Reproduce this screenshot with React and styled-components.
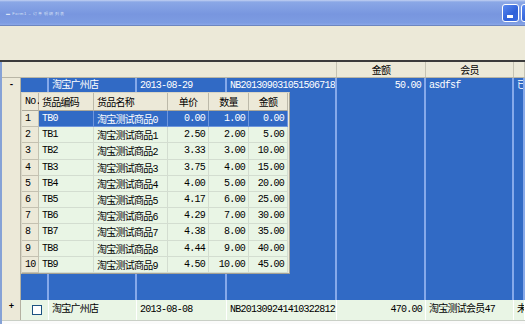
import React from "react";
import styled, { createGlobalStyle } from "styled-components";

const GlobalStyle = createGlobalStyle`
  html, body { margin: 0; padding: 0; background: #ffffff; }
  * { box-sizing: border-box; }
`;

const Window = styled.div`
  width: 525px;
  height: 324px;
  overflow: hidden;
  display: flex;
  flex-direction: column;
  background: #ffffff;
  font-family: "Liberation Mono", "Noto Sans CJK SC", monospace;
  font-size: 10px;
  letter-spacing: -0.75px;
  color: #000;
`;

const TitleBar = styled.div`
  height: 26px;
  flex: none;
  display: flex;
  align-items: center;
  padding-left: 6px;
  background: linear-gradient(#c3d1f2 0, #8aa7e6 2px, #7896df 55%, #7d9ce2 88%, #8aa7e8 96%, #52679a 100%);
  overflow: hidden;
`;

const TitleText = styled.div`
  flex: 1;
  font-family: "Liberation Sans", sans-serif;
  font-size: 4px;
  letter-spacing: 0.6px;
  color: #d9e2f6;
  white-space: nowrap;
`;

const TitleButtons = styled.div`
  display: flex;
  gap: 2px;
  margin-right: -13px;
`;

const CaptionButton = styled.div`
  width: 17px;
  height: 18px;
  border: 1px solid #ffffff;
  border-radius: 3px;
  background: linear-gradient(135deg, #5b8af0, #2f60d8 60%, #3a6be0);
  display: flex;
  align-items: flex-end;
  padding: 0 0 3px 4px;
  &::after {
    content: "";
    width: 6px;
    height: 3px;
    background: #ffffff;
    display: ${(p) => (p.$min ? "block" : "none")};
  }
`;

const Toolbar = styled.div`
  height: 36px;
  flex: none;
  background: #ece9d8;
  border-bottom: 2px solid #3b3b3b;
`;

const GridArea = styled.div`
  flex: 1;
  display: flex;
  flex-direction: column;
  border-left: 2px solid #86a2d6;
`;

const COLS = "19px 28px 88px 90px 110px 89px 88px 1fr";

const HeaderRow = styled.div`
  display: grid;
  grid-template-columns: ${COLS};
  height: 16px;
  flex: none;
  background: #ece9d8;
  border-bottom: 1px solid #b9b6a6;
`;

const HeaderCell = styled.div`
  grid-column: ${(p) => p.$span || "auto"};
  display: flex;
  align-items: center;
  justify-content: center;
  border-right: 1px solid #c6c3b3;
  color: #000;
`;

const MasterRow = styled.div`
  display: grid;
  grid-template-columns: ${COLS};
  grid-template-rows: 14px 182px 26px;
  flex: none;
`;

const Gutter = styled.div`
  grid-row: 1 / -1;
  grid-column: 1;
  background: #ece9d8;
  border-right: 1px solid #b4b1a1;
  display: flex;
  justify-content: center;
  padding-top: ${(p) => p.$pad}px;
  color: #000;
  font-weight: bold;
  font-size: 9px;
  line-height: 8px;
`;

const Cell = styled.div`
  grid-row: 1 / -1;
  grid-column: ${(p) => p.$col};
  background: ${(p) => (p.$sel ? "#316ac5" : "#e9f5e5")};
  color: ${(p) => (p.$sel ? "#ffffff" : "#000000")};
  border-right: ${(p) => (p.$sel ? "2px solid #86a9ea" : "1px solid #ffffff")};
  padding: 2px 3px 0;
  text-align: ${(p) => (p.$right ? "right" : "left")};
  white-space: nowrap;
  overflow: hidden;
  line-height: 12px;
`;

const Check = styled.div`
  width: 10px;
  height: 10px;
  margin: 1px 0 0 8px;
  border: 1px solid #1c5180;
  background: #ffffff;
`;

const DetailPanel = styled.div`
  grid-row: 2;
  grid-column: 2 / 7;
  justify-self: start;
  width: 269px;
  height: 182px;
  z-index: 1;
  background: #ece9d8;
  border: 1px solid #a5a294;
  border-top-color: #d8d5c6;
  border-left-color: #d8d5c6;
  display: grid;
  grid-template-columns: 17px 55px 74px 41px 40px 39px 1fr;
  grid-template-rows: 18px repeat(10, 1fr);
`;

const DHead = styled.div`
  display: flex;
  align-items: center;
  justify-content: ${(p) => (p.$center ? "center" : "flex-start")};
  padding: 0 3px;
  border-right: 1px solid #bcb9a9;
  border-bottom: 1px solid #aca899;
  background: #ece9d8;
  white-space: nowrap;
`;

const DCell = styled.div`
  display: flex;
  align-items: center;
  justify-content: ${(p) => (p.$right ? "flex-end" : "flex-start")};
  padding: 0 3px;
  white-space: nowrap;
  background: ${(p) => (p.$no ? "#ece9d8" : p.$sel ? "#316ac5" : "#e9f5e5")};
  color: ${(p) => (p.$sel && !p.$no ? "#ffffff" : "#000000")};
  border-right: 1px solid ${(p) => (p.$no ? "#c4c1b1" : p.$sel ? "#6e96dc" : "#d3ddd0")};
  border-bottom: 1px solid ${(p) => (p.$no ? "#c4c1b1" : p.$sel ? "#6e96dc" : "#d3ddd0")};
`;

const Filler = styled.div`
  background: #ece9d8;
`;

const PlainRow = styled.div`
  display: grid;
  grid-template-columns: ${COLS};
  height: 21px;
  flex: none;
  border-bottom: 1px solid #c9cfc6;
`;

const RowGutter = styled(Gutter)`
  grid-row: 1;
`;

const PlainCell = styled(Cell)`
  grid-row: 1;
  padding-top: 4px;
`;

const Blank = styled.div`
  flex: 1;
  background: #fbfbfb;
`;

const items = Array.from({ length: 10 }, (_, i) => {
  const price = [0, 2.5, 3.33, 3.75, 4.0, 4.17, 4.29, 4.38, 4.44, 4.5][i];
  const qty = i + 1;
  return {
    no: i + 1,
    code: `TB${i}`,
    name: `淘宝测试商品${i}`,
    price: price.toFixed(2),
    qty: qty.toFixed(2),
    amt: (i * 5).toFixed(2),
  };
});

export default function App() {
  return (
    <Window>
      <GlobalStyle />
      <TitleBar>
        <TitleText>▬ Form1 – 订单 明细 列表</TitleText>
        <TitleButtons>
          <CaptionButton $min />
          <CaptionButton />
        </TitleButtons>
      </TitleBar>
      <Toolbar />
      <GridArea>
        <HeaderRow>
          <HeaderCell $span="1 / 6" />
          <HeaderCell>金额</HeaderCell>
          <HeaderCell>会员</HeaderCell>
          <HeaderCell />
        </HeaderRow>
        <MasterRow>
          <Gutter $pad={3}>-</Gutter>
          <Cell $col={2} $sel />
          <Cell $col={3} $sel>淘宝广州店</Cell>
          <Cell $col={4} $sel>2013-08-29</Cell>
          <Cell $col={5} $sel>NB201309031051506718</Cell>
          <Cell $col={6} $sel $right>50.00</Cell>
          <Cell $col={7} $sel>asdfsf</Cell>
          <Cell $col={8} $sel>已</Cell>
          <DetailPanel>
            <DHead>No.</DHead>
            <DHead>货品编码</DHead>
            <DHead>货品名称</DHead>
            <DHead $center>单价</DHead>
            <DHead $center>数量</DHead>
            <DHead $center>金额</DHead>
            <Filler />
            {items.map((it, i) => (
              <React.Fragment key={it.no}>
                <DCell $no $sel={i === 0}>{it.no}</DCell>
                <DCell $sel={i === 0}>{it.code}</DCell>
                <DCell $sel={i === 0}>{it.name}</DCell>
                <DCell $sel={i === 0} $right>{it.price}</DCell>
                <DCell $sel={i === 0} $right>{it.qty}</DCell>
                <DCell $sel={i === 0} $right>{it.amt}</DCell>
                <Filler />
              </React.Fragment>
            ))}
          </DetailPanel>
        </MasterRow>
        <PlainRow>
          <RowGutter $pad={3}>+</RowGutter>
          <PlainCell $col={2}>
            <Check />
          </PlainCell>
          <PlainCell $col={3}>淘宝广州店</PlainCell>
          <PlainCell $col={4}>2013-08-08</PlainCell>
          <PlainCell $col={5}>NB201309241410322812</PlainCell>
          <PlainCell $col={6} $right>470.00</PlainCell>
          <PlainCell $col={7}>淘宝测试会员47</PlainCell>
          <PlainCell $col={8}>未</PlainCell>
        </PlainRow>
        <Blank />
      </GridArea>
    </Window>
  );
}
